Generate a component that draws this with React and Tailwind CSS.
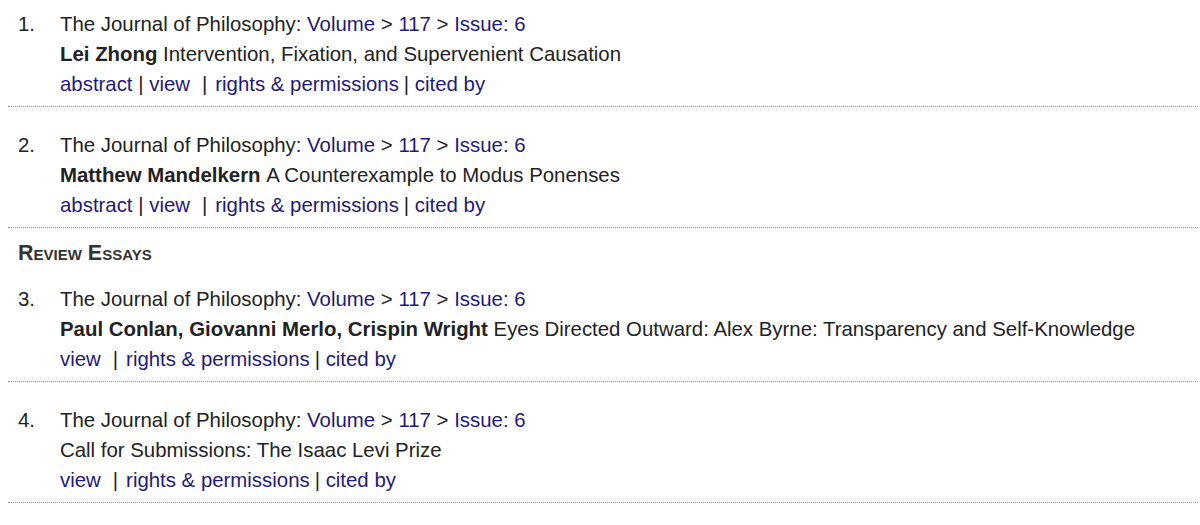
import React from "react";

const items = [
  { n: 1, authors: "Lei Zhong", title: "Intervention, Fixation, and Supervenient Causation", abstract: true },
  { n: 2, authors: "Matthew Mandelkern", title: "A Counterexample to Modus Ponenses", abstract: true },
  { section: "Review Essays" },
  { n: 3, authors: "Paul Conlan, Giovanni Merlo, Crispin Wright", title: "Eyes Directed Outward: Alex Byrne: Transparency and Self-Knowledge" },
  { n: 4, title: "Call for Submissions: The Isaac Levi Prize" },
];

const link = "text-[#1f1a77]";

function Entry({ item, first }) {
  return (
    <div className={`border-b border-dotted border-[#9a9a9a] ml-2 mr-[2px] pb-[7px] ${first ? "pt-[9px]" : "pt-[23px]"}`}>
      <div className="flex">
        <span className="w-[52px] pl-[10px]">{item.n}.</span>
        <div className="flex flex-col">
          <div className="h-[30px] leading-[30px]">
            The Journal of Philosophy: <span className={link}>Volume</span> &gt; <span className={link}>117</span> &gt;{" "}
            <span className={link}>Issue: 6</span>
          </div>
          <div className="h-[30px] leading-[30px]">
            {item.authors && <b className="font-bold">{item.authors} </b>}
            {item.title}
          </div>
          <div className="h-[30px] leading-[30px] whitespace-pre">
            {item.abstract && (
              <>
                <span className={link}>abstract</span>{" | "}
              </>
            )}
            <span className={link}>view</span>
            <span className="ml-[12px]">|</span>
            <span className={`${link} ml-[8px]`}>rights &amp; permissions</span>
            <span className="ml-[5px]">|</span>{" "}
            <span className={link}>cited by</span>
          </div>
        </div>
      </div>
    </div>
  );
}

export default function App() {
  return (
    <div
      className="w-[1200px] h-[525px] bg-white text-[#222] text-[20.4px] overflow-hidden"
      style={{ fontFamily: '"Liberation Sans", Arial, sans-serif' }}
    >
      {items.map((item, i) =>
        item.section ? (
          <div key={i} className="pl-[18px] pt-[15px] h-[33px] leading-[20px] font-bold text-[#333] text-[21.5px] [font-variant:small-caps]">
            {item.section}
          </div>
        ) : (
          <Entry key={i} item={item} first={i === 0} />
        )
      )}
    </div>
  );
}
